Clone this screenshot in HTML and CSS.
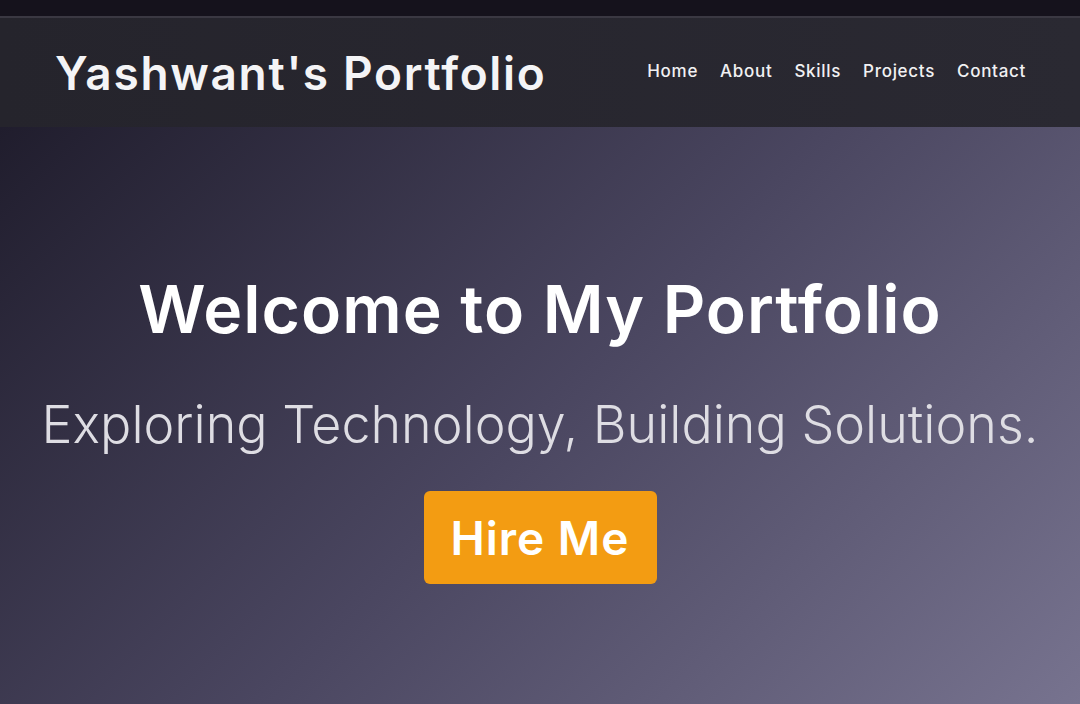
FILE: index.html
```html
<!DOCTYPE html>
<html lang="en">
<head>
<meta charset="utf-8">
<title>Yashwant's Portfolio</title>
<link rel="stylesheet" href="styles.css">
</head>
<body>
<div class="topbar"></div>
<header class="site-header">
  <h2 class="logo">Yashwant's Portfolio</h2>
  <nav class="nav">
    <a href="#home">Home</a>
    <a href="#about">About</a>
    <a href="#skills">Skills</a>
    <a href="#projects">Projects</a>
    <a href="#contact">Contact</a>
  </nav>
</header>
<section class="hero">
  <h1 class="hero-title">Welcome to My Portfolio</h1>
  <p class="hero-sub">Exploring Technology, Building Solutions.</p>
  <a class="btn" href="#contact">Hire Me</a>
</section>
</body>
</html>
```

FILE: styles.css
```css
* { box-sizing: border-box; }
html, body { margin: 0; padding: 0; }
body {
  font-family: Inter, "Open Sans", sans-serif;
  background: #1f1c2c;
  color: #fff;
  overflow: hidden;
}
.topbar {
  height: 18px;
  background: #15121c;
  border-bottom: 2px solid #3a3842;
}
.site-header {
  height: 109px;
  display: flex;
  align-items: center;
  justify-content: space-between;
  padding: 0 54px 0 55px;
  background: linear-gradient(90deg, #25242c, #2a2932);
}
.logo {
  margin: 0;
  font-size: 46px;
  font-weight: 600;
  color: #f4f4f6;
  letter-spacing: 1.7px;
}
.nav {
  display: flex;
  gap: 22px;
  margin-top: -3px;
}
.nav a {
  color: #f1f1f3;
  text-decoration: none;
  font-size: 17px;
  font-weight: 500;
  letter-spacing: 0.7px;
}
.hero {
  height: 577px;
  background: linear-gradient(135deg, #201d2d 0%, #4a4660 50%, #77738f 100%);
  display: flex;
  flex-direction: column;
  align-items: center;
  padding-top: 137px;
  text-align: center;
}
.hero-title {
  margin: 0;
  font-size: 66px;
  font-weight: 600;
  line-height: 90px;
  letter-spacing: 1px;
}
.hero-sub {
  margin: 35px 0 0;
  font-size: 52px;
  font-weight: 300;
  color: #dedde3;
  line-height: 72px;
}
.btn {
  margin-top: 30px;
  width: 233px;
  height: 93px;
  display: flex;
  align-items: center;
  justify-content: center;
  background: #f39c12;
  color: #fff;
  border-radius: 6px;
  text-decoration: none;
  font-size: 46px;
  font-weight: 600;
  letter-spacing: 1px;
}
```
